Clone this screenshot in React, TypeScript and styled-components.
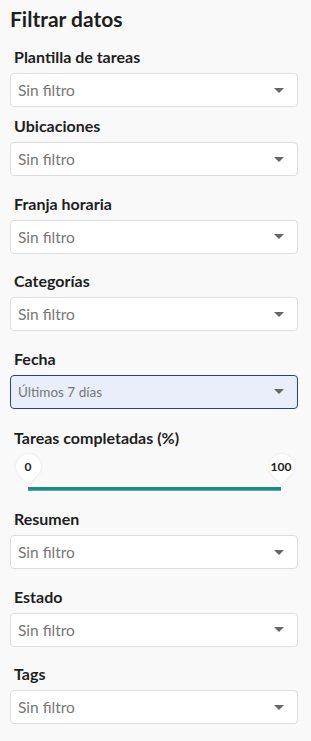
import React from 'react';
import styled, { createGlobalStyle } from 'styled-components';

interface Filter {
  label: string;
  value: string;
  active?: boolean;
}

const topFilters: Filter[] = [
  { label: 'Plantilla de tareas', value: 'Sin filtro' },
  { label: 'Ubicaciones', value: 'Sin filtro' },
  { label: 'Franja horaria', value: 'Sin filtro' },
  { label: 'Categorías', value: 'Sin filtro' },
  { label: 'Fecha', value: 'Últimos 7 días', active: true },
];

const bottomFilters: Filter[] = [
  { label: 'Resumen', value: 'Sin filtro' },
  { label: 'Estado', value: 'Sin filtro' },
  { label: 'Tags', value: 'Sin filtro' },
];

const range = { min: 0, max: 100, from: 0, to: 100 };

type Spacing = 'none' | 'tight' | 'normal';

const App: React.FC = () => {
  const renderFilter = (f: Filter, spacing: Spacing) => (
    <Group key={f.label} spacing={spacing}>
      <Label>{f.label}</Label>
      <Select active={f.active}>
        <SelectText active={f.active}>{f.value}</SelectText>
        <Caret />
      </Select>
    </Group>
  );

  const pct = (v: number) => ((v - range.min) / (range.max - range.min)) * 100;

  return (
    <>
      <GlobalStyle />
      <Panel>
        <Title>Filtrar datos</Title>
        {topFilters.map((f, i) =>
          renderFilter(f, i === 0 ? 'none' : i === 1 ? 'tight' : 'normal')
        )}
        <SliderGroup>
          <Label>Tareas completadas (%)</Label>
          <SliderArea>
            <Track>
              {[range.from, range.to].map(v => (
                <Thumb key={v} style={{ left: `${pct(v)}%` }}>
                  <Drop />
                  <ThumbValue>{v}</ThumbValue>
                </Thumb>
              ))}
            </Track>
          </SliderArea>
        </SliderGroup>
        {bottomFilters.map(f => renderFilter(f, 'normal'))}
      </Panel>
    </>
  );
};

export default App;

const GlobalStyle = createGlobalStyle`
  body {
    margin: 0;
    background: #f9f9f9;
    font-family: Lato, "Liberation Sans", sans-serif;
  }
`;

const Panel = styled.div`
  display: flex;
  flex-direction: column;
  padding: 6px 13px 0 10px;
  background: #f9f9f9;
  height: 741px;
  box-sizing: border-box;
  overflow: hidden;
`;

const Title = styled.h2`
  margin: 0 0 15px;
  font-size: 21px;
  line-height: 26px;
  font-weight: 700;
  color: #1e1e1e;
`;

const gaps: Record<Spacing, string> = {
  none: '0',
  tight: '9px',
  normal: '17.5px',
};

const Group = styled.div<{ spacing: Spacing }>`
  display: flex;
  flex-direction: column;
  flex-shrink: 0;
  margin-top: ${p => gaps[p.spacing]};
`;

const Label = styled.div`
  font-size: 16px;
  line-height: 20px;
  font-weight: 700;
  color: #1e1e1e;
  padding-left: 4px;
  margin-bottom: 6px;
  white-space: nowrap;
`;

const Select = styled.div<{ active?: boolean }>`
  height: 34px;
  box-sizing: border-box;
  display: flex;
  align-items: center;
  justify-content: space-between;
  padding: 0 13px 0 7px;
  background: ${p => (p.active ? '#e9eefa' : '#ffffff')};
  border: 1px solid ${p => (p.active ? '#2b3e8e' : '#dddddd')};
  border-radius: 4px;
`;

const SelectText = styled.span<{ active?: boolean }>`
  font-size: ${p => (p.active ? '13.5px' : '15.5px')};
  color: #777777;
`;

const Caret = styled.span`
  width: 0;
  height: 0;
  border-left: 5px solid transparent;
  border-right: 5px solid transparent;
  border-top: 5px solid #666666;
`;

const SliderGroup = styled.div`
  display: flex;
  flex-direction: column;
  flex-shrink: 0;
  margin-top: 19.3px;
`;

const SliderArea = styled.div`
  padding: 33px 17px 0 18px;
  margin-bottom: 1px;
`;

const Track = styled.div`
  position: relative;
  height: 3px;
  background: #1f8a87;
  border-bottom: 1px solid #5aa9a6;
`;

const Thumb = styled.div`
  position: absolute;
  bottom: 7px;
  width: 26px;
  height: 32px;
  margin-left: -13px;
  display: flex;
  justify-content: center;
`;

const Drop = styled.div`
  position: absolute;
  top: 3px;
  left: 0.5px;
  width: 25px;
  height: 25px;
  background: #ffffff;
  border-radius: 50% 50% 0 50%;
  transform: rotate(45deg);
  box-shadow: 0 0 3px rgba(0, 0, 0, 0.1);
`;

const ThumbValue = styled.span`
  position: relative;
  margin-top: 9px;
  font-size: 12px;
  line-height: 14px;
  font-weight: 700;
  color: #1e1e1e;
`;
